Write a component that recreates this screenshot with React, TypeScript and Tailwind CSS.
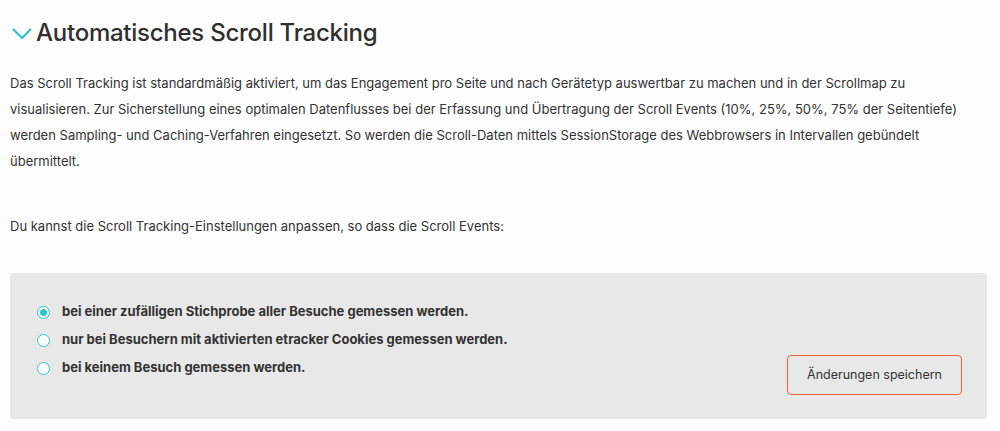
export default function App() {
  const options = [
    "bei einer zufälligen Stichprobe aller Besuche gemessen werden.",
    "nur bei Besuchern mit aktivierten etracker Cookies gemessen werden.",
    "bei keinem Besuch gemessen werden.",
  ];
  return (
    <div className="min-h-[431px] bg-[#fdfdfd] px-[10px] pt-[16px] text-[#333333]" style={{ fontFamily: "Inter, 'Noto Sans', sans-serif" }}>
      {/* Heading */}
      <div className="flex items-center gap-[3px]">
        <svg width="22" height="14" viewBox="0 0 22 14" className="mt-[2px] ml-[1px]">
          <path d="M2 2 L11 11 L20 2" fill="none" stroke="#30c2cc" strokeWidth="2" />
        </svg>
        <h2 className="text-[24px] font-medium leading-[34px] tracking-[-0.25px] text-[#2f2f2f]">Automatisches Scroll Tracking</h2>
      </div>

      <p className="mt-[20px] text-[13px] leading-[26px]">
        Das Scroll Tracking ist standardmäßig aktiviert, um das Engagement pro Seite und nach Gerätetyp auswertbar zu machen und in der Scrollmap zu
        <br />
        visualisieren. Zur Sicherstellung eines optimalen Datenflusses bei der Erfassung und Übertragung der Scroll Events (10%, 25%, 50%, 75% der Seitentiefe)
        <br />
        werden Sampling- und Caching-Verfahren eingesetzt. So werden die Scroll-Daten mittels SessionStorage des Webbrowsers in Intervallen gebündelt
        <br />
        übermittelt.
      </p>

      <p className="mt-[39px] text-[13px] leading-[26px]">
        Du kannst die Scroll Tracking-Einstellungen anpassen, so dass die Scroll Events:
      </p>

      {/* Settings panel */}
      <div className="mt-[34px] flex w-[977px] items-end justify-between rounded-[4px] bg-[#e8e8e8] pl-[27px] pr-[25px] pt-[29px] pb-[24px]">
        <div className="flex flex-col gap-[8px] pb-[17px]">
          {options.map((label, i) => (
            <label key={label} className="flex h-[20px] items-center gap-[12px]">
              <span className="flex h-[13px] w-[13px] items-center justify-center rounded-full border border-[#2fc4c9] bg-white">
                {i === 0 && <span className="h-[7px] w-[7px] rounded-full bg-[#2fc4c9]" />}
              </span>
              <span className="text-[13px] font-bold text-[#333333]">{label}</span>
            </label>
          ))}
        </div>
        <button className="h-[40px] w-[175px] rounded-[4px] border border-[#e8643c] text-[12.5px] text-[#333333]">
          Änderungen speichern
        </button>
      </div>
    </div>
  );
}
